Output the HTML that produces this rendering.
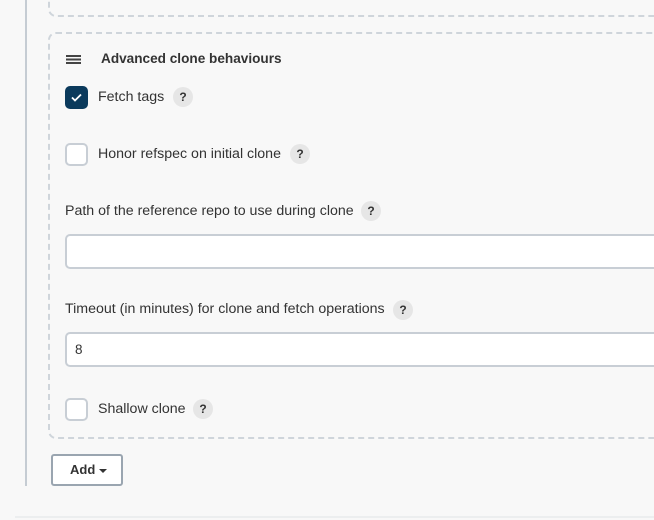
<!DOCTYPE html>
<html><head><style>
body{margin:0;width:654px;height:520px;background:#f8f8f8;position:relative;overflow:hidden;font-family:"Liberation Sans",sans-serif;color:#333;font-size:14.2px}
.a{position:absolute}
.q{position:absolute;width:20px;height:20px;border-radius:50%;background:#e6e6e6;font-size:12px;font-weight:bold;text-align:center;line-height:20px;color:#333}
.cb{position:absolute;width:19px;height:19px;border:2px solid #c8ced5;border-radius:5px;background:#fff}
.inp{position:absolute;left:65px;width:620px;height:31px;border:2px solid #c8ced5;border-radius:5px;background:#fff}
</style></head><body>
<div class="a" style="left:25px;top:0;width:2px;height:486px;background:#c5ccd3"></div>
<div class="a" style="left:48px;top:-20px;width:640px;height:33px;border:2px dashed #cfd5db;border-radius:8px"></div>
<div class="a" style="left:48px;top:32px;width:640px;height:403px;border:2px dashed #cfd5db;border-radius:8px"></div>
<div class="a" style="left:66px;top:55px;width:15px;height:1.5px;background:#444;box-shadow:0 3.5px 0 #444,0 7px 0 #444"></div>
<div class="a" style="left:101px;top:51px;font-weight:bold;font-size:13.6px">Advanced clone behaviours</div>
<div class="a" style="left:65px;top:86px;width:23px;height:23px;border-radius:5px;background:#0b3a5c"><svg width="23" height="23"><path d="M7 11.5l3 3 6-6" stroke="#fff" stroke-width="1.8" fill="none"/></svg></div>
<div class="a" style="left:98px;top:89px">Fetch tags</div><div class="q" style="left:173px;top:87px">?</div>
<div class="cb" style="left:65px;top:143px"></div>
<div class="a" style="left:98px;top:146px">Honor refspec on initial clone</div><div class="q" style="left:290px;top:144px">?</div>
<div class="a" style="left:65px;top:203px">Path of the reference repo to use during clone</div><div class="q" style="left:361px;top:201px">?</div>
<div class="inp" style="top:234px"></div>
<div class="a" style="left:65px;top:301px">Timeout (in minutes) for clone and fetch operations</div><div class="q" style="left:393px;top:300px">?</div>
<div class="inp" style="top:332px"></div>
<div class="a" style="left:75px;top:342px;font-size:13.5px">8</div>
<div class="cb" style="left:65px;top:398px"></div>
<div class="a" style="left:98px;top:401px">Shallow clone</div><div class="q" style="left:193px;top:399px">?</div>
<div class="a" style="left:51px;top:454px;width:68px;height:28px;border:2px solid #9aa5b0;border-radius:3px;background:#fff;font-size:13px;font-weight:bold;line-height:28px;color:#333"><span style="margin-left:17px">Add</span><span style="position:absolute;left:46px;top:13px;border:4px solid transparent;border-top:4px solid #333;border-bottom:0"></span></div>
<div class="a" style="left:15px;top:516px;width:640px;height:2px;background:#eceeef"></div>
</body></html>
